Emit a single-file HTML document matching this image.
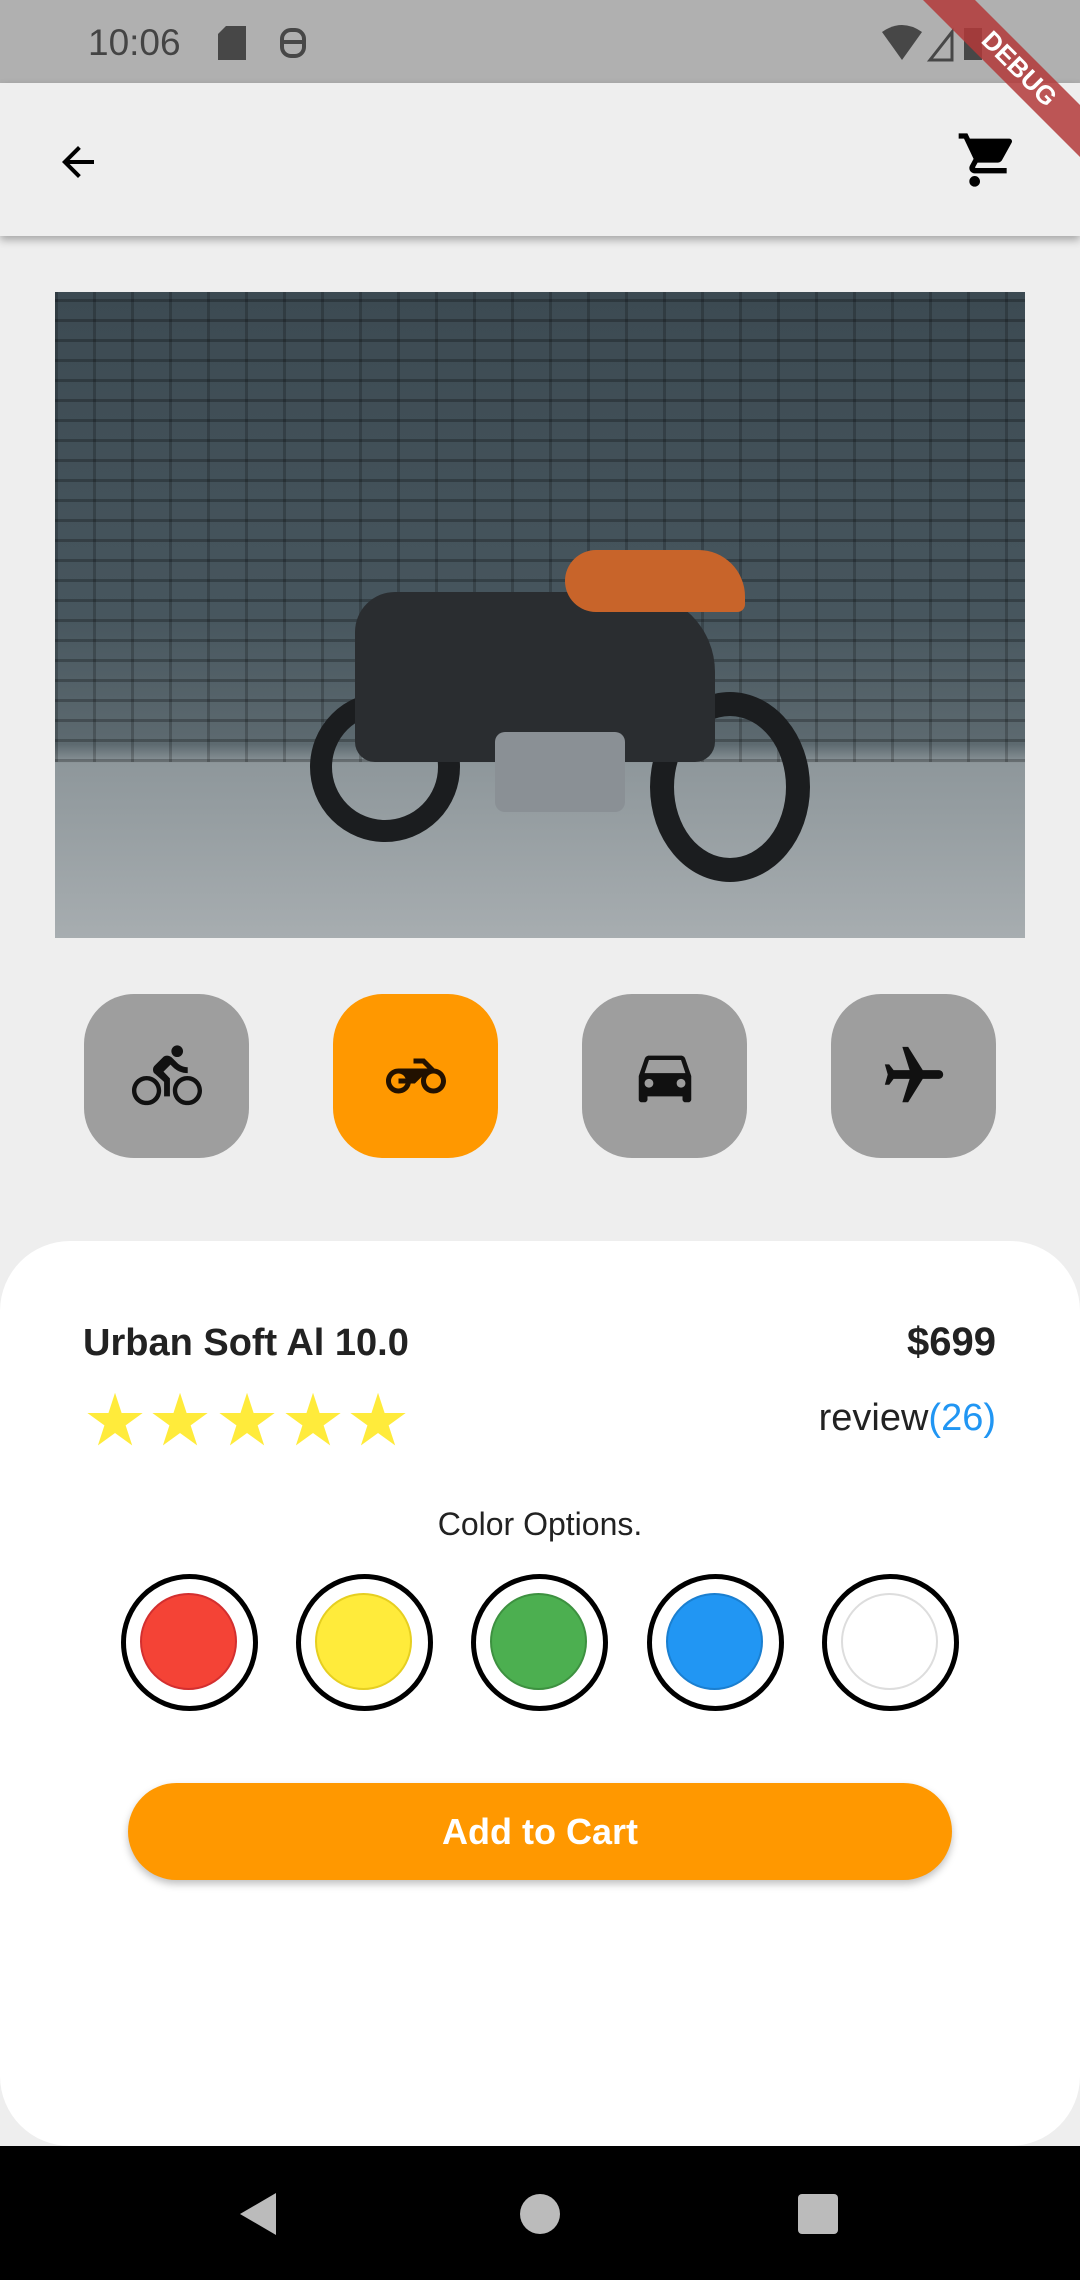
<!DOCTYPE html>
<html><head><style>
body{margin:0;width:1080px;height:2280px;background:#eeeeee;position:relative;overflow:hidden;font-family:"Liberation Sans",Roboto,sans-serif}
.a{position:absolute}
.btn{position:absolute;top:994px;width:165px;height:164px;border-radius:50px;background:#9e9e9e;display:flex;align-items:center;justify-content:center}
.c{position:absolute;top:1574px;width:127px;height:127px;border:5px solid #000;border-radius:50%;background:#fff}
.c i{position:absolute;left:14px;top:14px;width:97px;height:97px;border-radius:50%;box-sizing:border-box}
.s{position:absolute;top:1384px;width:70px;text-align:center;font-size:72px;line-height:72px;color:#ffeb3b;font-family:"DejaVu Sans",sans-serif}
</style></head><body>
<div class="a" style="left:0;top:0;width:1080px;height:83px;background:#b0b0b0"></div>
<div class="a" style="left:88px;top:22px;font-size:37px;color:#444">10:06</div>
<svg class="a" style="left:218px;top:26px" width="28" height="34"><path d="M8 0h20v34H0V8z" fill="#474747"/></svg>
<svg class="a" style="left:278px;top:26px" width="30" height="34"><rect x="4" y="4" width="22" height="26" rx="9" fill="none" stroke="#474747" stroke-width="4"/><rect x="4" y="14" width="22" height="4" fill="#474747"/></svg>
<svg class="a" style="left:882px;top:24px" width="110" height="40"><path d="M0 8Q20-6 40 8L20 36z" fill="#474747"/><path d="M48 36L70 8v28z" fill="none" stroke="#474747" stroke-width="3"/><rect x="82" y="4" width="18" height="32" fill="#474747"/></svg>
<div class="a" style="left:0;top:83px;width:1080px;height:153px;background:#eeeeee;box-shadow:0 4px 8px rgba(0,0,0,.3)"></div>
<svg class="a" style="left:54px;top:138px" width="48" height="48" viewBox="0 0 24 24"><path d="M20 11H7.83l5.59-5.59L12 4l-8 8 8 8 1.41-1.41L7.83 13H20v-2z"/></svg>
<svg class="a" style="left:956px;top:128px" width="64" height="64" viewBox="0 0 24 24"><path d="M7 18c-1.1 0-2 .9-2 2s.9 2 2 2 2-.9 2-2-.9-2-2-2zM1 2v2h2l3.6 7.59-1.35 2.45c-.16.28-.25.61-.25.96 0 1.1.9 2 2 2h12v-2H7.42c-.14 0-.25-.11-.25-.25l.03-.12.9-1.63h7.45c.75 0 1.41-.41 1.75-1.03l3.58-6.49A1 1 0 0 0 20 4H5.21l-.94-2H1z"/></svg>
<svg class="a" style="left:0;top:0" width="1080" height="200"><polygon points="923,0 975,0 1080,105 1080,157" fill="#b33a3a" opacity=".85"/><text x="0" y="0" transform="translate(1018,70) rotate(45)" text-anchor="middle" dominant-baseline="middle" fill="#fff" font-family="Liberation Sans" font-weight="bold" font-size="26">DEBUG</text></svg>
<div class="a" style="left:55px;top:292px;width:970px;height:646px;overflow:hidden;background:linear-gradient(180deg,#3c4a52 0%,#47565e 50%,#5d6a70 70%,#8e979b 73%,#a7adb0 100%)">
<div class="a" style="left:0;top:0;width:970px;height:470px;background:repeating-linear-gradient(0deg,rgba(0,0,0,.25) 0 3px,transparent 3px 20px),repeating-linear-gradient(90deg,rgba(0,0,0,.2) 0 3px,transparent 3px 38px)"></div>
<div class="a" style="left:255px;top:400px;width:150px;height:150px;border-radius:50%;border:22px solid #1b1d1f;box-sizing:border-box"></div>
<div class="a" style="left:595px;top:400px;width:160px;height:190px;border-radius:50%;border:24px solid #1b1d1f;box-sizing:border-box"></div>
<div class="a" style="left:300px;top:300px;width:360px;height:170px;background:#2a2d30;border-radius:40px 80px 20px 20px"></div>
<div class="a" style="left:440px;top:440px;width:130px;height:80px;background:#8a9095;border-radius:10px"></div>
<div class="a" style="left:510px;top:258px;width:180px;height:62px;background:#c8642a;border-radius:40px 60px 10px 40px"></div>
</div>
<div class="btn" style="left:84px"><svg width="70" height="70" viewBox="0 0 24 24"><path d="M15.5 5.5c1.1 0 2-.9 2-2s-.9-2-2-2-2 .9-2 2 .9 2 2 2zM5 12c-2.8 0-5 2.2-5 5s2.2 5 5 5 5-2.2 5-5-2.2-5-5-5zm0 8.5c-1.9 0-3.5-1.6-3.5-3.5s1.6-3.5 3.5-3.5 3.5 1.6 3.5 3.5-1.6 3.5-3.5 3.5zm5.8-10l2.4-2.4.8.8c1.3 1.3 3 2.1 5.1 2.1V9c-1.5 0-2.700-.6-3.6-1.5l-1.9-1.9c-.5-.4-1-.6-1.6-.6s-1.1.2-1.4.6L7.8 8.4c-.4.4-.6.9-.6 1.4 0 .6.2 1.1.6 1.4L11 14v5h2v-6.2l-2.2-2.3zM19 12c-2.8 0-5 2.2-5 5s2.2 5 5 5 5-2.2 5-5-2.2-5-5-5zm0 8.5c-1.900 0-3.5-1.6-3.5-3.5s1.6-3.5 3.5-3.5 3.5 1.6 3.5 3.5-1.6 3.5-3.5 3.5z" fill="#111"/></svg></div>
<div class="btn" style="left:333px;background:#ff9800"><svg width="60" height="60" viewBox="0 0 24 24"><path d="M19.44 9.03L15.41 5H11v2h3.59l2 2H5c-2.8 0-5 2.2-5 5s2.2 5 5 5c2.46 0 4.450-1.69 4.9-4h1.65l2.77-2.77c-.21.54-.32 1.14-.32 1.77 0 2.8 2.2 5 5 5s5-2.2 5-5c0-2.65-1.97-4.770-4.56-4.97zM7.82 15C7.4 16.15 6.28 17 5 17c-1.63 0-3-1.37-3-3s1.37-3 3-3c1.28 0 2.4.85 2.82 2H5v2h2.82zM19 17c-1.66 0-3-1.34-3-3s1.34-3 3-3 3 1.34 3 3-1.34 3-3 3z" fill="#221100"/></svg></div>
<div class="btn" style="left:582px"><svg width="70" height="70" viewBox="0 0 24 24"><path d="M18.92 6.01C18.72 5.42 18.16 5 17.5 5h-11c-.66 0-1.21.42-1.42 1.01L3 12v8c0 .55.45 1 1 1h1c.55 0 1-.45 1-1v-1h12v1c0 .55.45 1 1 1h1c.55 0 1-.45 1-1v-8l-2.08-5.99zM6.5 16c-.83 0-1.5-.67-1.5-1.5S5.67 13 6.5 13s1.5.67 1.5 1.5S7.33 16 6.5 16zm11 0c-.83 0-1.5-.67-1.5-1.5s.67-1.5 1.5-1.5 1.5.67 1.5 1.5-.67 1.5-1.5 1.5zM5 11l1.5-4.5h11L19 11H5z" fill="#111"/></svg></div>
<div class="btn" style="left:831px"><svg width="70" height="70" viewBox="0 0 24 24"><path d="M21 16v-2l-8-5V3.5c0-.83-.67-1.5-1.5-1.5S10 2.67 10 3.5V9l-8 5v2l8-2.5V19l-2 1.5V22l3.5-1 3.5 1v-1.5L13 19v-5.5l8 2.5z" transform="rotate(90 12 12)" fill="#111"/></svg></div>
<div class="a" style="left:0;top:1241px;width:1080px;height:905px;background:#fff;border-radius:70px"></div>
<div class="a" style="left:83px;top:1322px;font-size:38px;font-weight:bold;color:#222">Urban Soft Al 10.0</div>
<div class="a" style="right:84px;top:1320px;font-size:40px;font-weight:bold;color:#222">$699</div>
<div class="s" style="left:80px">★</div>
<div class="s" style="left:145px">★</div>
<div class="s" style="left:212px">★</div>
<div class="s" style="left:278px">★</div>
<div class="s" style="left:343px">★</div>
<div class="a" style="right:84px;top:1397px;font-size:38px;color:#222">review<span style="color:#2196f3">(26)</span></div>
<div class="a" style="left:0;width:1080px;top:1506px;font-size:32px;color:#222;text-align:center">Color Options.</div>
<div class="c" style="left:121px"><i style="background:#f44336;border:2px solid #d32f2f"></i></div>
<div class="c" style="left:296px"><i style="background:#ffeb3b;border:2px solid #e6cf20"></i></div>
<div class="c" style="left:471px"><i style="background:#4caf50;border:2px solid #3d9140"></i></div>
<div class="c" style="left:647px"><i style="background:#2196f3;border:2px solid #1a7fd0"></i></div>
<div class="c" style="left:822px"><i style="background:#fff;border:2px solid #ddd"></i></div>
<div class="a" style="left:128px;top:1783px;width:824px;height:97px;border-radius:49px;background:#ff9800;box-shadow:0 4px 8px rgba(0,0,0,.25);color:#fff;font-size:36px;font-weight:bold;text-align:center;line-height:97px">Add to Cart</div>
<div class="a" style="left:0;top:2146px;width:1080px;height:134px;background:#000"></div>
<svg class="a" style="left:236px;top:2191px" width="44" height="46"><path d="M40 2v42L4 23z" fill="#bbb"/></svg>
<div class="a" style="left:520px;top:2194px;width:40px;height:40px;border-radius:50%;background:#bbb"></div>
<div class="a" style="left:798px;top:2194px;width:40px;height:40px;border-radius:4px;background:#bbb"></div>
</body></html>
